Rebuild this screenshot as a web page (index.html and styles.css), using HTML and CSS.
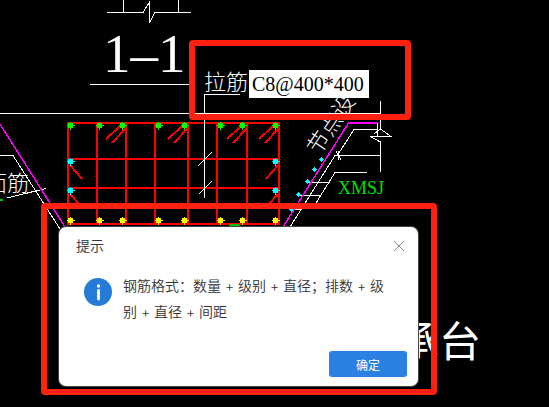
FILE: index.html
```html
<!DOCTYPE html>
<html lang="zh-CN">
<head>
    <meta charset="UTF-8">
    <meta name="viewport" content="width=device-width, initial-scale=1.0">
    <title>钢筋格式提示</title>
    <link rel="stylesheet" href="styles.css">
</head>
<body>
    <main class="workspace">
        <svg class="drawing" width="549" height="407" viewBox="0 0 549 407" shape-rendering="crispEdges">
            <defs>
                <g id="bar">
                    <circle r="3" />
                    <path d="M-4 0H4M0 -4V4" stroke="currentColor" />
                </g>
                <path id="hooks" d="M-6 3L-20 16M0 5L-14 20" />
            </defs>

            <!-- section lines -->
            <g class="line">
                <path d="M107 12.5H143L149.500 2V23L155 12.500H191M123.500 0V12M178.500 0V12" />
                <path d="M90 84.500H190M0 113.500H380" />
                <path d="M0 155.500H13L60 229M7 198L46 188.500" />
                <path d="M377 129.500H354L337 156M380 155.500H335L290 227M367 172.500H335L316 203" />
                <path d="M309 182.500H330M300 195.500H320M292 209.500H301M336 151L341 160M338.500 151V160" />
                <path d="M380.500 101V129L391 136.500H370L380.500 142V172M377.500 123V136M380 129L374 134" />
            </g>
            <path class="line magenta" d="M0 124L65 227M377 123H348.500L283 227" />
            <path class="line green" d="M0 199.500H3" />

            <!-- reinforcement mesh -->
            <g class="mesh">
                <path d="M68 123H279V224H68ZM68 159H279M68 188H279M97 123V224M126 123V224M155 123V224M188 123V224M217 123V224M247 123V224" />
                <use href="#hooks" x="126" y="123" />
                <use href="#hooks" x="188" y="123" />
                <use href="#hooks" x="247" y="123" />
                <use href="#hooks" x="279" y="123" />
                <path d="M70 165L82 179M70 194L80 205M278 165L266 179M278 194L268 205" />
            </g>
            <path class="line green" d="M228 227Q234 222 241 227" />
            <g class="bar-green">
                <use href="#bar" x="70.500" y="125.500" />
                <use href="#bar" x="99.500" y="125.500" />
                <use href="#bar" x="122.500" y="125.500" />
                <use href="#bar" x="158.500" y="125.500" />
                <use href="#bar" x="184.500" y="125.500" />
                <use href="#bar" x="220.500" y="125.500" />
                <use href="#bar" x="242.500" y="125.500" />
                <use href="#bar" x="275.500" y="125.500" />
            </g>
            <g class="bar-yellow">
                <use href="#bar" x="70.500" y="220.500" />
                <use href="#bar" x="99.500" y="220.500" />
                <use href="#bar" x="122.500" y="220.500" />
                <use href="#bar" x="158.500" y="220.500" />
                <use href="#bar" x="184.500" y="220.500" />
                <use href="#bar" x="220.500" y="220.500" />
                <use href="#bar" x="242.500" y="220.500" />
                <use href="#bar" x="275.500" y="220.500" />
            </g>
            <g class="bar-cyan">
                <use href="#bar" x="70.500" y="161.500" />
                <use href="#bar" x="70.500" y="190.500" />
                <use href="#bar" x="275.500" y="161.500" />
                <use href="#bar" x="275.500" y="190.500" />
                <path d="M321.500 157l2.500 2.500l-2.500 2.500l-2.500 -2.500zM314.500 167l2.500 2.500l-2.500 2.500l-2.500 -2.500zM307.500 179l2.500 2.500l-2.500 2.500l-2.500 -2.500zM298.500 192l2.500 2.500l-2.500 2.500l-2.500 -2.500zM291.500 207l2.500 2.500l-2.500 2.500l-2.500 -2.500z" />
            </g>
            <path class="line" d="M240 94.500H204.500V198M198 166L212 152M199 194L212 181" />

            <text class="section-title" x="103" y="72">1–1</text>
            <text class="note" x="204" y="90">拉筋</text>
            <text class="note" x="-15" y="191">面筋</text>
            <text class="note" transform="translate(319 156) rotate(-56)">节点设</text>
            <text class="axis-name" x="338" y="194">XMSJ</text>
            <text class="part-name" x="397" y="357">承台</text>
        </svg>

        <div class="highlight highlight-input"></div>
        <div class="highlight highlight-dialog"></div>

        <input class="bar-input" type="text" value="C8@400*400" aria-label="拉筋">

        <section class="dialog" role="dialog" aria-labelledby="dialogTitle">
            <header class="dialog-header">
                <h1 class="dialog-title" id="dialogTitle">提示</h1>
                <button class="close-button" type="button" aria-label="关闭">
                    <svg width="12" height="12" viewBox="0 0 12 12">
                        <path d="M1 1L11 11M11 1L1 11" />
                    </svg>
                </button>
            </header>
            <div class="dialog-body">
                <svg class="info-icon" width="28" height="28" viewBox="0 0 28 28">
                    <circle cx="14" cy="14" r="14" fill="#257bd8" />
                    <circle cx="14.500" cy="8" r="1.700" fill="#fff" />
                    <path d="M14.500 12.500V21" stroke="#fff" stroke-width="2.800" stroke-linecap="round" />
                </svg>
                <p class="message">钢筋格式：数量 + 级别 + 直径；排数 + 级别 + 直径 + 间距</p>
            </div>
            <footer class="dialog-footer">
                <button class="ok-button" type="button">确定</button>
            </footer>
        </section>
    </main>
</body>
</html>
```
FILE: styles.css
```css
body {
    margin: 0;
    background: #000;
    font-family: Inter, "Noto Sans CJK SC", sans-serif;
}

.workspace {
    position: relative;
    min-height: 100vh;
    overflow: hidden;
}

/* Drawing */
.drawing {
    display: block;
}

.line {
    fill: none;
    stroke: #fff;
    stroke-width: 1;
}

.magenta {
    stroke: #f0f;
    stroke-width: 1.5;
}

.green {
    stroke: #00c000;
    stroke-width: 2;
}

.mesh {
    fill: none;
    stroke: #f00;
    stroke-width: 2;
}

.bar-green {
    color: #0f0;
    fill: #0f0;
}

.bar-yellow {
    color: #ff0;
    fill: #ff0;
}

.bar-cyan {
    color: #0ff;
    fill: #0ff;
}

.section-title {
    fill: #fff;
    font-family: "Liberation Serif", serif;
    font-size: 55px;
}

.note {
    fill: #fff;
    font-family: "Noto Sans CJK SC", sans-serif;
    font-size: 22px;
    font-weight: 300;
}

.axis-name {
    fill: #00e000;
    font-family: "Liberation Serif", serif;
    font-size: 18px;
}

.part-name {
    fill: #fff;
    font-family: "Noto Sans CJK SC", sans-serif;
    font-size: 42px;
}

/* Red frames over the drawing */
.highlight {
    position: absolute;
    box-sizing: border-box;
    border: 6px solid #ff2010;
    border-radius: 4px;
}

.highlight-input {
    left: 189px;
    top: 40px;
    width: 222px;
    height: 80px;
}

.highlight-dialog {
    left: 41px;
    top: 203px;
    width: 396px;
    height: 192px;
}

.bar-input {
    position: absolute;
    left: 249px;
    top: 70px;
    box-sizing: border-box;
    width: 120px;
    height: 28px;
    padding: 0 3px;
    border: none;
    outline: none;
    background: #fff;
    color: #000;
    font-family: "Liberation Serif", serif;
    font-size: 20px;
}

/* Dialog */
.dialog {
    position: absolute;
    left: 59px;
    top: 227px;
    width: 359px;
    border-radius: 7px;
    background: #fff;
    box-shadow: 0 0 0 1px #444;
    color: #333;
    font-size: 14px;
    font-weight: 350;
}

.dialog-header {
    display: flex;
    align-items: center;
    justify-content: space-between;
    padding: 8px 13px 8px 17px;
}

.dialog-title {
    margin: 0;
    font-size: 14px;
    font-weight: inherit;
    line-height: 22px;
}

.close-button {
    display: flex;
    padding: 0;
    border: none;
    background: none;
    cursor: pointer;
}

.close-button path {
    stroke: #888;
    stroke-width: 1;
}

.dialog-body {
    display: flex;
    align-items: flex-start;
    gap: 11px;
    padding: 8px 24px 26px 25px;
}

.info-icon {
    flex: none;
    margin-top: 5px;
}

.message {
    margin: 0;
    line-height: 26px;
}

.dialog-footer {
    display: flex;
    justify-content: flex-end;
    padding: 0 11px 9px;
}

.ok-button {
    width: 78px;
    height: 26px;
    padding: 0;
    border: none;
    border-radius: 3px;
    background: #2b80e2;
    color: #fff;
    font-family: inherit;
    font-size: 12px;
    cursor: pointer;
}
```
